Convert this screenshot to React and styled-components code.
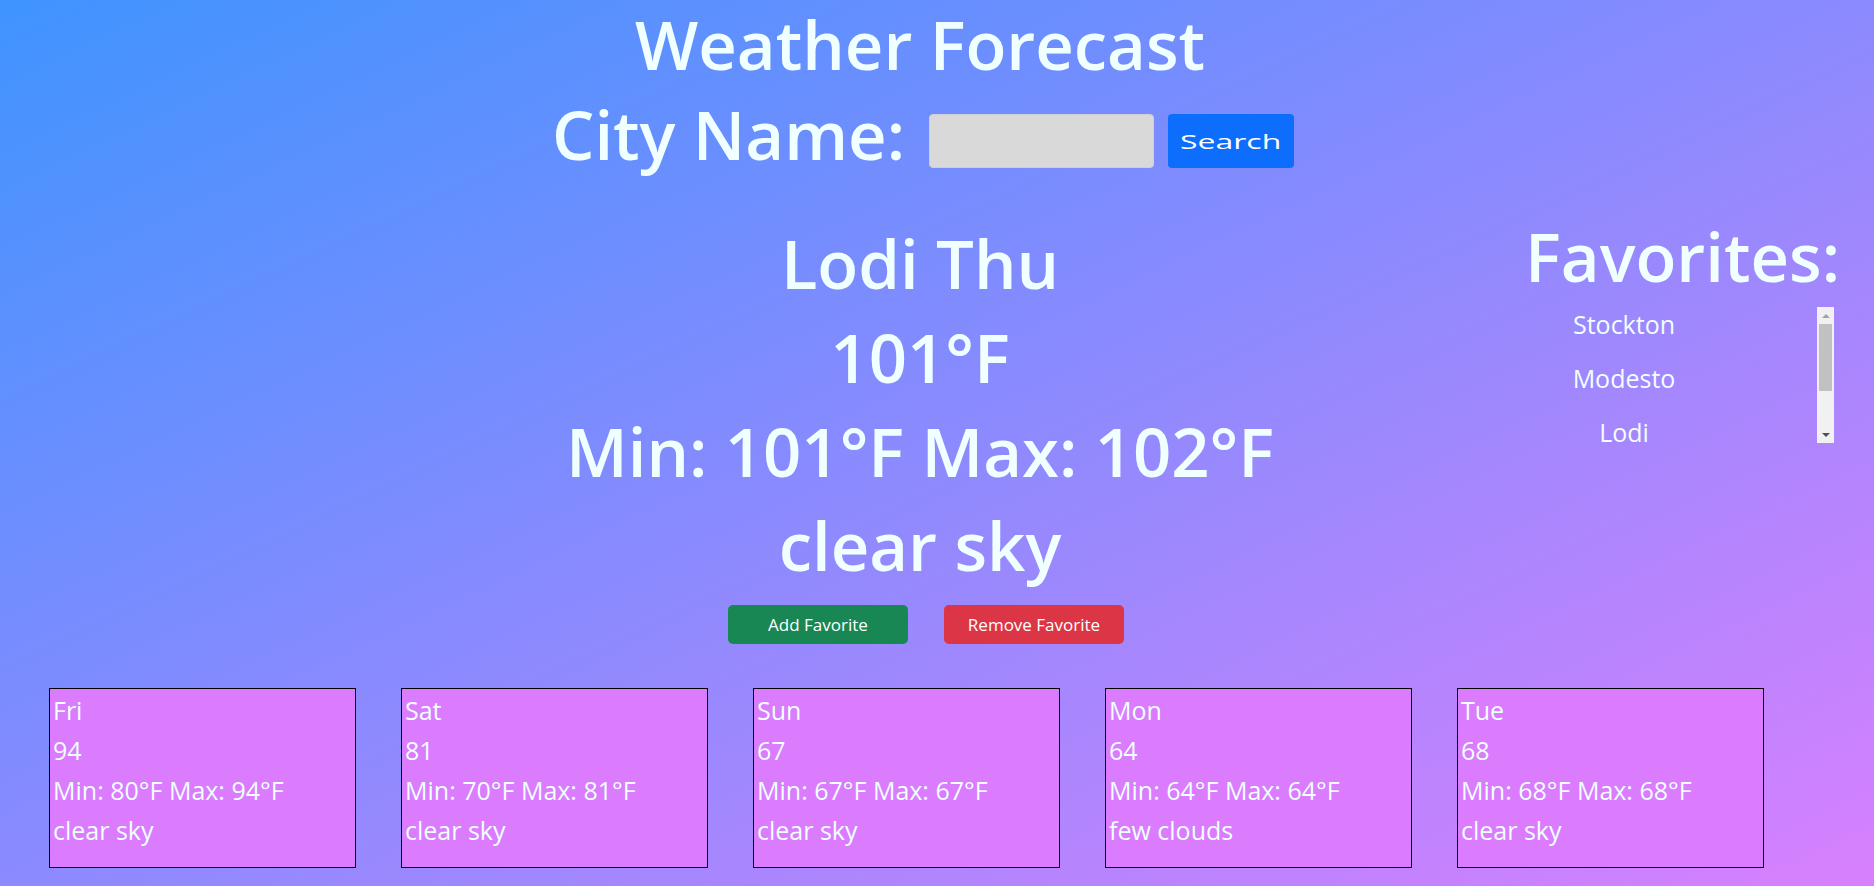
import React from "react";
import styled, { createGlobalStyle } from "styled-components";

const GlobalStyle = createGlobalStyle`
  html, body { margin: 0; padding: 0; }
  body {
    min-height: 100vh;
    background: linear-gradient(to bottom right, #3f94ff, #d880fd);
    font-family: "Open Sans", "Noto Sans", sans-serif;
    color: #f0ffff;
  }
  * { box-sizing: border-box; }
`;

const Page = styled.div`
  padding: 6px 34px 19px 0;
`;

const Title = styled.h1`
  margin: 0;
  font-size: 67px;
  font-weight: 600;
  line-height: 76px;
  text-align: center;
`;

const SearchRow = styled.form`
  margin-top: 11px;
  display: flex;
  justify-content: center;
  align-items: flex-start;
  padding-left: 6px;
`;

const Label = styled.label`
  font-size: 67px;
  font-weight: 600;
  line-height: 82px;
  margin-right: 24px;
`;

const CityInput = styled.input`
  margin-top: 21px;
  width: 225px;
  height: 54px;
  background: #d9d9d9;
  border: 1px solid #cfcfd6;
  border-radius: 4px;
  outline: none;
`;

const SearchButton = styled.button`
  margin-top: 21px;
  margin-left: 14px;
  width: 126px;
  height: 54px;
  background: #0d6efd;
  border: none;
  border-radius: 4px;
  color: #fff;
  font-family: "Open Sans", sans-serif;
  font-size: 20px;
  display: flex;
  align-items: center;
  justify-content: center;
  padding: 0;
  span {
    display: inline-block;
    transform: scaleX(1.6);
  }
`;

const Middle = styled.section`
  margin-top: 41px;
  display: grid;
  grid-template-columns: 1fr auto 1fr;
  align-items: start;
`;

const Current = styled.div`
  grid-column: 2;
  text-align: center;
`;

const BigLine = styled.div`
  font-size: 67px;
  font-weight: 600;
  line-height: 94px;
  white-space: nowrap;
`;

const ButtonRow = styled.div`
  margin-top: 13px;
  display: flex;
  justify-content: center;
  gap: 36px;
  padding-left: 12px;
`;

const ActionButton = styled.button`
  width: 180px;
  height: 39px;
  border: none;
  border-radius: 5px;
  color: #fff;
  font-family: "Open Sans", sans-serif;
  font-size: 17px;
  background: ${(p) => (p.$variant === "danger" ? "#dc3545" : "#198754")};
`;

const Favorites = styled.aside`
  grid-column: 3;
  justify-self: end;
  display: flex;
  flex-direction: column;
  align-items: flex-end;
`;

const FavTitle = styled.h2`
  margin: 0;
  font-size: 67px;
  font-weight: 600;
  line-height: 80px;
`;

const FavBox = styled.div`
  margin: 11px 6px 0 0;
  width: 403px;
  height: 136px;
  display: flex;
`;

const FavViewport = styled.div`
  flex: 1;
  overflow: hidden;
`;

const FavList = styled.ul`
  margin: 0;
  padding: 0;
  list-style: none;
`;

const FavItem = styled.li`
  font-size: 25px;
  line-height: 34px;
  margin-bottom: 20px;
  text-align: center;
`;

const Scrollbar = styled.div`
  width: 17px;
  flex: none;
  background: #f1f1f1;
  display: flex;
  flex-direction: column;
`;

const ScrollArrow = styled.div`
  height: 17px;
  flex: none;
  display: flex;
  align-items: center;
  justify-content: center;
  &::before {
    content: "";
    width: 0;
    height: 0;
    border-left: 4px solid transparent;
    border-right: 4px solid transparent;
    ${(p) =>
      p.$down
        ? "border-top: 4px solid #505050;"
        : "border-bottom: 4px solid #a3a3a3;"}
  }
`;

const ScrollTrack = styled.div`
  flex: 1;
  padding: 0 2px;
`;

const Thumb = styled.div`
  height: 67px;
  background: #c1c1c1;
`;

const Cards = styled.div`
  margin-top: 44px;
  display: flex;
  gap: 45px;
  padding-left: 49px;
`;

const Card = styled.div`
  width: 307px;
  height: 180px;
  flex: none;
  background: #da7cfd;
  border: 1px solid #000;
  padding: 1px 3px;
`;

const CardLine = styled.div`
  font-size: 25px;
  line-height: 40px;
  white-space: nowrap;
`;

const forecast = [
  { day: "Fri", temp: 94, min: 80, max: 94, desc: "clear sky" },
  { day: "Sat", temp: 81, min: 70, max: 81, desc: "clear sky" },
  { day: "Sun", temp: 67, min: 67, max: 67, desc: "clear sky" },
  { day: "Mon", temp: 64, min: 64, max: 64, desc: "few clouds" },
  { day: "Tue", temp: 68, min: 68, max: 68, desc: "clear sky" },
];

const favorites = ["Stockton", "Modesto", "Lodi", "Sacramento"];

export default function App() {
  return (
    <>
      <GlobalStyle />
      <Page>
        <Title>Weather Forecast</Title>
        <SearchRow onSubmit={(e) => e.preventDefault()}>
          <Label htmlFor="city">City Name:</Label>
          <CityInput id="city" type="text" />
          <SearchButton type="submit">
            <span>Search</span>
          </SearchButton>
        </SearchRow>
        <Middle>
          <Current>
            <BigLine>Lodi Thu</BigLine>
            <BigLine>101°F</BigLine>
            <BigLine>Min: 101°F Max: 102°F</BigLine>
            <BigLine>clear sky</BigLine>
            <ButtonRow>
              <ActionButton>Add Favorite</ActionButton>
              <ActionButton $variant="danger">Remove Favorite</ActionButton>
            </ButtonRow>
          </Current>
          <Favorites>
            <FavTitle>Favorites:</FavTitle>
            <FavBox>
              <FavViewport>
                <FavList>
                  {favorites.map((f) => (
                    <FavItem key={f}>{f}</FavItem>
                  ))}
                </FavList>
              </FavViewport>
              <Scrollbar aria-hidden="true">
                <ScrollArrow />
                <ScrollTrack>
                  <Thumb />
                </ScrollTrack>
                <ScrollArrow $down />
              </Scrollbar>
            </FavBox>
          </Favorites>
        </Middle>
        <Cards>
          {forecast.map((d) => (
            <Card key={d.day}>
              <CardLine>{d.day}</CardLine>
              <CardLine>{d.temp}</CardLine>
              <CardLine>
                Min: {d.min}°F Max: {d.max}°F
              </CardLine>
              <CardLine>{d.desc}</CardLine>
            </Card>
          ))}
        </Cards>
      </Page>
    </>
  );
}
